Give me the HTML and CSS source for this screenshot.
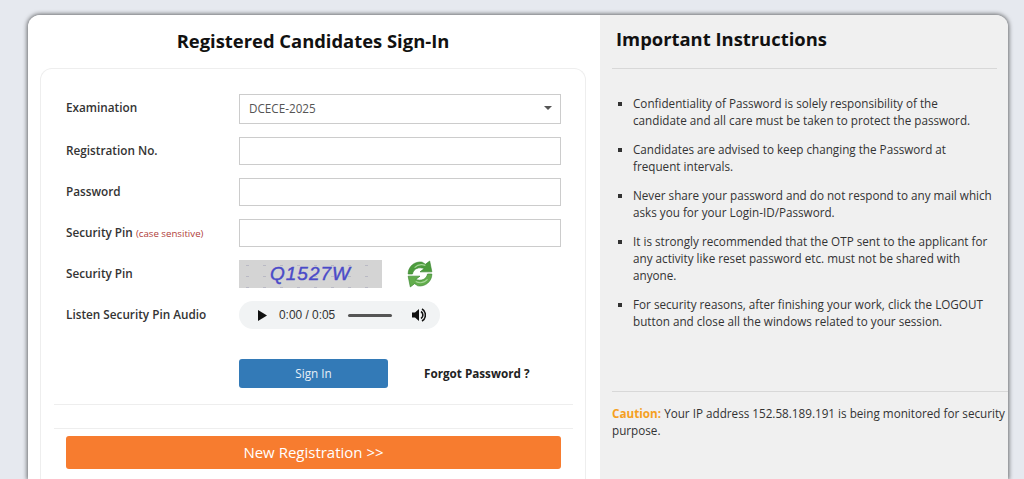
FILE: index.html
```html
<!DOCTYPE html>
<html lang="en">
<head>
<meta charset="UTF-8">
<title>Registered Candidates Sign-In</title>
<link rel="stylesheet" href="styles.css">
</head>
<body>

<div class="card">
    <div class="left-pane">
        <h2 class="signin-title">Registered Candidates Sign-In</h2>
        <div class="form-box">
            <div class="form-row row-select">
                <label class="form-label">Examination</label>
                <div class="select-box">
                    <span>DCECE-2025</span>
                    <span class="select-arrow"></span>
                </div>
            </div>
            <div class="form-row">
                <label class="form-label">Registration No.</label>
                <input class="text-input" type="text">
            </div>
            <div class="form-row">
                <label class="form-label">Password</label>
                <input class="text-input" type="text">
            </div>
            <div class="form-row">
                <label class="form-label">Security Pin <small class="case-note">(case sensitive)</small></label>
                <input class="text-input" type="text">
            </div>
            <div class="form-row">
                <label class="form-label">Security Pin</label>
                <div class="captcha"><span>Q1527W</span></div>
                <svg class="refresh-icon" viewBox="1 1 24 26" width="26" height="28">
                    <path d="M2 14 C2 7 8 2 15 3 L18 5 L22 2 L24 12 L13 12 L17 9 C12 7 7 9 6 14 Z" fill="#4c9c3c" stroke="#3a8430" stroke-width="0.6"/>
                    <path d="M24 14 C24 21 18 26 11 25 L8 23 L4 26 L2 16 L13 16 L9 19 C14 21 19 19 20 14 Z" fill="#62ad4c" stroke="#3a8430" stroke-width="0.6"/>
                    <path d="M8 8 C11 5 15 5 18 6" fill="none" stroke="#a8d79a" stroke-width="1"/>
                    <path d="M9 21 C13 23 17 22 20 19" fill="none" stroke="#a8d79a" stroke-width="1"/>
                </svg>
            </div>
            <div class="form-row">
                <label class="form-label">Listen Security Pin Audio</label>
                <div class="audio-player">
                    <svg class="play-icon" viewBox="0 0 9 11" width="9" height="11"><path d="M0 0 L9 5.5 L0 11 Z" fill="#111"/></svg>
                    <span class="audio-time">0:00 / 0:05</span>
                    <span class="audio-track"></span>
                    <svg class="volume-icon" viewBox="0 0 14 14" width="14" height="14">
                        <path d="M0 4.5 H3 L7 1 V13 L3 9.5 H0 Z" fill="#111"/>
                        <path d="M9 3.5 C11.5 5 11.5 9 9 10.5 M10 1 C14.5 3.5 14.5 10.5 10 13" fill="none" stroke="#111" stroke-width="1.6"/>
                    </svg>
                </div>
            </div>
            <div class="form-row row-actions">
                <span class="form-label"></span>
                <button class="signin-btn">Sign In</button>
                <a class="forgot-link">Forgot Password ?</a>
            </div>
            <hr class="divider divider-first">
            <hr class="divider divider-second">
            <button class="register-btn">New Registration &gt;&gt;</button>
        </div>
    </div>

    <div class="right-pane">
        <h3 class="info-title">Important Instructions</h3>
        <hr class="info-rule">
        <ul class="info-list">
            <li>Confidentiality of Password is solely responsibility of the candidate and all care must be taken to protect the password.</li>
            <li>Candidates are advised to keep changing the Password at frequent intervals.</li>
            <li>Never share your password and do not respond to any mail which asks you for your Login-ID/Password.</li>
            <li>It is strongly recommended that the OTP sent to the applicant for any activity like reset password etc. must not be shared with anyone.</li>
            <li>For security reasons, after finishing your work, click the LOGOUT button and close all the windows related to your session.</li>
        </ul>
        <hr class="caution-rule">
        <p class="caution"><b>Caution:</b> Your IP address 152.58.189.191 is being monitored for security purpose.</p>
    </div>
</div>

</body>
</html>
```

FILE: styles.css
```css
html, body {
    height: 479px;
    overflow: hidden;
}

body {
    margin: 0;
    padding: 15px 16px 0 28px;
    box-sizing: border-box;
    background-color: #e6e9ef;
    font-family: "Open Sans", Arial, sans-serif;
    font-size: 11.7px;
    color: #333;
}

.card {
    display: flex;
    width: 980px;
    height: 464px;
    border-radius: 12px 12px 0 0;
    overflow: hidden;
    box-shadow: 0 0 4px 1px rgba(0, 0, 0, 0.55);
}

.left-pane {
    display: flex;
    flex-direction: column;
    width: 572px;
    box-sizing: border-box;
    padding: 0 14px 0 12px;
    background: white;
}

.signin-title {
    margin: 13px 0 14px;
    font-size: 18.4px;
    line-height: 26px;
    font-weight: 700;
    color: #111;
    text-align: center;
}

.form-box {
    flex: 1;
    box-sizing: border-box;
    padding: 25px 12px 0 13px;
    border: 1px solid #eee;
    border-bottom: 0;
    border-radius: 12px 12px 0 0;
}

.form-row {
    display: flex;
    align-items: center;
    height: 28px;
    margin-bottom: 13px;
    padding-left: 12px;
}

.row-select {
    height: 30px;
}

.form-label {
    width: 173px;
    flex-shrink: 0;
    padding-bottom: 2px;
    font-size: 11.75px;
    font-weight: 600;
    color: #333;
}

.row-select .form-label {
    padding-bottom: 4px;
}

.case-note {
    font-size: 9.7px;
    font-weight: 400;
    color: #b0403a;
}

.select-box {
    display: flex;
    align-items: center;
    justify-content: space-between;
    width: 322px;
    height: 30px;
    box-sizing: border-box;
    padding: 0 8px 2px 9px;
    border: 1px solid #ccc;
    color: #555;
}

.select-arrow {
    border-left: 4px solid transparent;
    border-right: 4px solid transparent;
    border-top: 4px solid #555;
}

.text-input {
    width: 322px;
    height: 28px;
    box-sizing: border-box;
    border: 1px solid #ccc;
    background: white;
}

.captcha {
    width: 143px;
    height: 28px;
    display: flex;
    align-items: center;
    justify-content: center;
    background-color: #d4d4d4;
    background-image: radial-gradient(#b9b9c4 1px, transparent 1.5px);
    background-size: 17px 11px;
    font-family: "Liberation Sans", Arial, sans-serif;
    font-size: 19px;
    font-style: italic;
    letter-spacing: 1px;
    -webkit-text-stroke: 0.4px #4a4ac8;
    color: #4a4ac8;
}

.refresh-icon {
    margin-left: 25px;
}

.audio-player {
    display: flex;
    align-items: center;
    width: 201px;
    height: 28px;
    box-sizing: border-box;
    padding-left: 19px;
    border-radius: 14px;
    background-color: #f1f3f4;
}

.audio-time {
    margin-left: 12px;
    font-family: "Liberation Sans", Arial, sans-serif;
    font-size: 11.9px;
    color: #333;
}

.audio-track {
    width: 44px;
    height: 3px;
    margin-left: 13px;
    border-radius: 2px;
    background-color: #555;
}

.volume-icon {
    margin-left: 20px;
}

.row-actions {
    height: 29px;
    margin-top: 30px;
    margin-bottom: 16px;
}

.signin-btn {
    width: 149px;
    height: 29px;
    padding-bottom: 2px;
    border: 0;
    border-radius: 3px;
    background-color: #337ab7;
    color: #e8f0f7;
    font-family: inherit;
    font-size: 11.7px;
}

.forgot-link {
    margin-left: 36px;
    padding-bottom: 2px;
    font-size: 11.7px;
    font-weight: 700;
    color: #222;
}

.divider {
    margin: 0;
    border: 0;
    border-top: 1px solid #eee;
}

.divider-second {
    margin-top: 23px;
}

.register-btn {
    display: block;
    width: 495px;
    height: 33px;
    margin: 7px 0 0 12px;
    padding-bottom: 3px;
    border: 0;
    border-radius: 3px;
    background-color: #f77c2f;
    color: white;
    font-family: inherit;
    font-size: 15px;
}

.right-pane {
    width: 408px;
    box-sizing: border-box;
    padding: 0 0 0 12px;
    background-color: #f0f0f0;
}

.info-title {
    margin: 10px 0 16px 4px;
    font-size: 18.4px;
    line-height: 27px;
    font-weight: 700;
    color: #111;
}

.info-rule {
    margin: 0 11px 0 0;
    border: 0;
    border-top: 1px solid #d8d8d8;
}

.info-list {
    margin: 26px 0 0;
    padding: 0 15px 0 21px;
    list-style-type: square;
    font-size: 11.7px;
    line-height: 17px;
    color: #333;
}

.info-list li {
    margin-bottom: 12px;
}

.caution-rule {
    margin: 61px 0 0;
    border: 0;
    border-top: 1px solid #d8d8d8;
}

.caution {
    margin: 13px 0 0;
    font-size: 11.7px;
    line-height: 17px;
    color: #333;
}

.caution b {
    font-weight: 700;
    color: #f5a01f;
}
```
